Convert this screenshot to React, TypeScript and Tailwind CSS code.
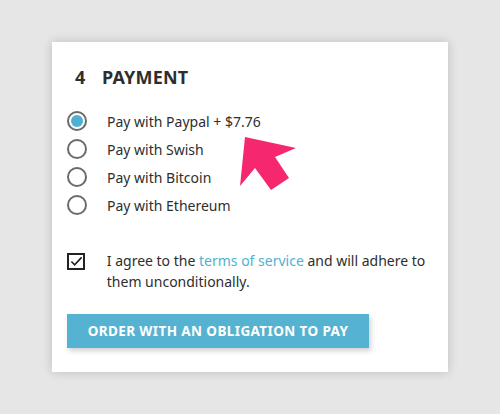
const options = ['Pay with Paypal + $7.76', 'Pay with Swish', 'Pay with Bitcoin', 'Pay with Ethereum'];

function Radio({ checked }: { checked: boolean }) {
    return (
        <span className="w-[20px] h-[20px] rounded-full border-2 border-[#6a6a6a] flex items-center justify-center bg-white">
            {checked && <span className="w-[12px] h-[12px] rounded-full bg-[#4fb1d2]" />}
        </span>
    );
}

export default function App() {
    return (
        <div className="w-[500px] h-[414px] bg-[#e6e6e6] pt-[42px] pl-[52px] font-['Noto_Sans',sans-serif] text-[#2e2e2e]">
            <div className="relative w-[396px] h-[330px] bg-white shadow-[0_0_10px_rgba(0,0,0,0.18)] pt-[23px] px-[15px]">
                {/* heading */}
                <h2 className="flex items-center h-[24px] pl-[8px] text-[18px] font-bold tracking-[0.2px]">
                    <span className="w-[27px]">4</span>
                    <span>PAYMENT</span>
                </h2>

                {/* payment options */}
                <div className="mt-[18px] flex flex-col">
                    {options.map((opt, i) => (
                        <label key={opt} className="flex items-center h-[28px]">
                            <span className="w-[40px] flex">
                                <Radio checked={i === 0} />
                            </span>
                            <span className="text-[14px]">{opt}</span>
                        </label>
                    ))}
                </div>

                {/* terms */}
                <div className="mt-[31px] flex items-start">
                    <span className="w-[40px] pt-[3px] flex">
                        <span className="w-[18px] h-[17px] border-2 border-[#222] flex items-center justify-center">
                            <svg viewBox="0 0 14 14" className="w-[13px] h-[13px]">
                                <path d="M1.5 7 L5 10.5 L12.5 2.5" fill="none" stroke="#222" strokeWidth="1.8" />
                            </svg>
                        </span>
                    </span>
                    <p className="text-[14px] leading-[21px] w-[328px]">
                        I agree to the <span className="text-[#4fb1d2]">terms of service</span> and will adhere to them unconditionally.
                    </p>
                </div>

                <button className="mt-[22px] w-[302px] h-[34px] bg-[#55b3d1] text-white text-[13.5px] font-bold tracking-[0.4px] shadow-[2px_3px_5px_rgba(0,0,0,0.18)]">
                    ORDER WITH AN OBLIGATION TO PAY
                </button>

                {/* pointer arrow */}
                <svg className="absolute left-0 top-0 w-[396px] h-[330px] pointer-events-none" viewBox="52 42 396 330">
                    <polygon points="245,137 296,148 275,157 289,178 271,190 255,168 240,186" fill="#f5276f" />
                </svg>
            </div>
        </div>
    );
}
